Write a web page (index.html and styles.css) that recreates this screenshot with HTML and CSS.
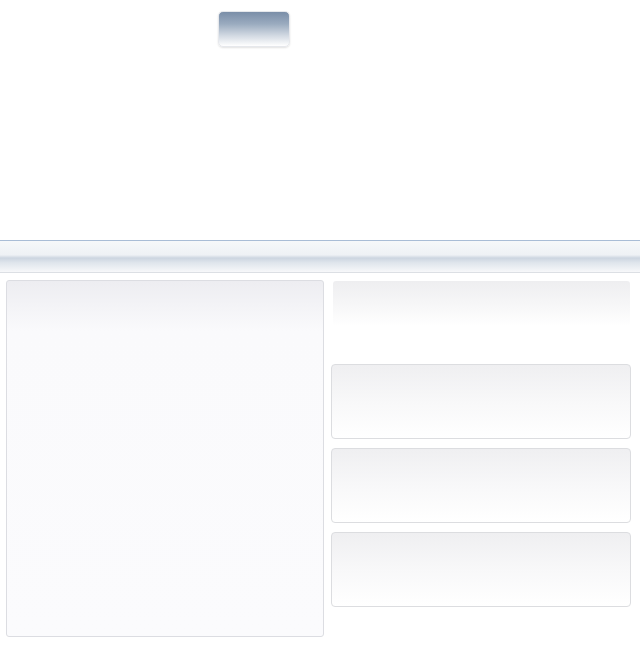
FILE: index.html
```html
<!DOCTYPE html>
<html>
<head>
<meta charset="utf-8">
<link rel="stylesheet" href="styles.css">
</head>
<body>
<div class="top">
  <div class="btn"></div>
</div>
<div class="bar"></div>
<div class="main">
  <div class="left"></div>
  <div class="right">
    <div class="head"></div>
    <div class="card"></div>
    <div class="card"></div>
    <div class="card"></div>
  </div>
</div>
</body>
</html>
```
FILE: styles.css
```css
html, body { margin: 0; padding: 0; background: #fff; font-family: "Liberation Sans", Arial, sans-serif; }
.top { height: 240px; padding-left: 218px; padding-top: 11px; box-sizing: border-box; }
.btn {
  width: 72px; height: 36px; box-sizing: border-box;
  border-radius: 5px;
  border: 1px solid #e6e8ec;
  background: linear-gradient(#7a8ea8 0%, #9aabbf 35%, #d3dae3 70%, #ffffff 100%);
  box-shadow: 0 1px 2px rgba(0,0,0,0.12);
}
.bar {
  height: 33px; box-sizing: border-box;
  border-top: 1px solid #a9bdd6;
  border-bottom: 1px solid #dcdfe4;
  background: linear-gradient(#f6f8fa 0%, #eef1f5 45%, #ccd5e0 55%, #dfe5ec 70%, #f7f8fa 100%);
}
.main { display: flex; gap: 7px; padding: 7px 9px 0 6px; }
.left {
  width: 318px; height: 357px; box-sizing: border-box;
  border: 1px solid #dcdde2; border-radius: 3px;
  background: linear-gradient(#ededf1 0px, #fafafc 50px, #fbfbfd 100%);
}
.right { flex: 1; display: flex; flex-direction: column; gap: 9px; }
.head {
  height: 45px; margin: 1px 1px 0 2px; border-radius: 3px;
  background: linear-gradient(#eeeef0 0%, #f7f7f8 55%, #ffffff 100%);
  margin-bottom: 29px;
}
.card {
  height: 75px; box-sizing: border-box;
  border: 1px solid #dcdde0; border-radius: 4px;
  background: linear-gradient(#efeff1 0%, #f8f8f9 50%, #ffffff 100%);
}
```
